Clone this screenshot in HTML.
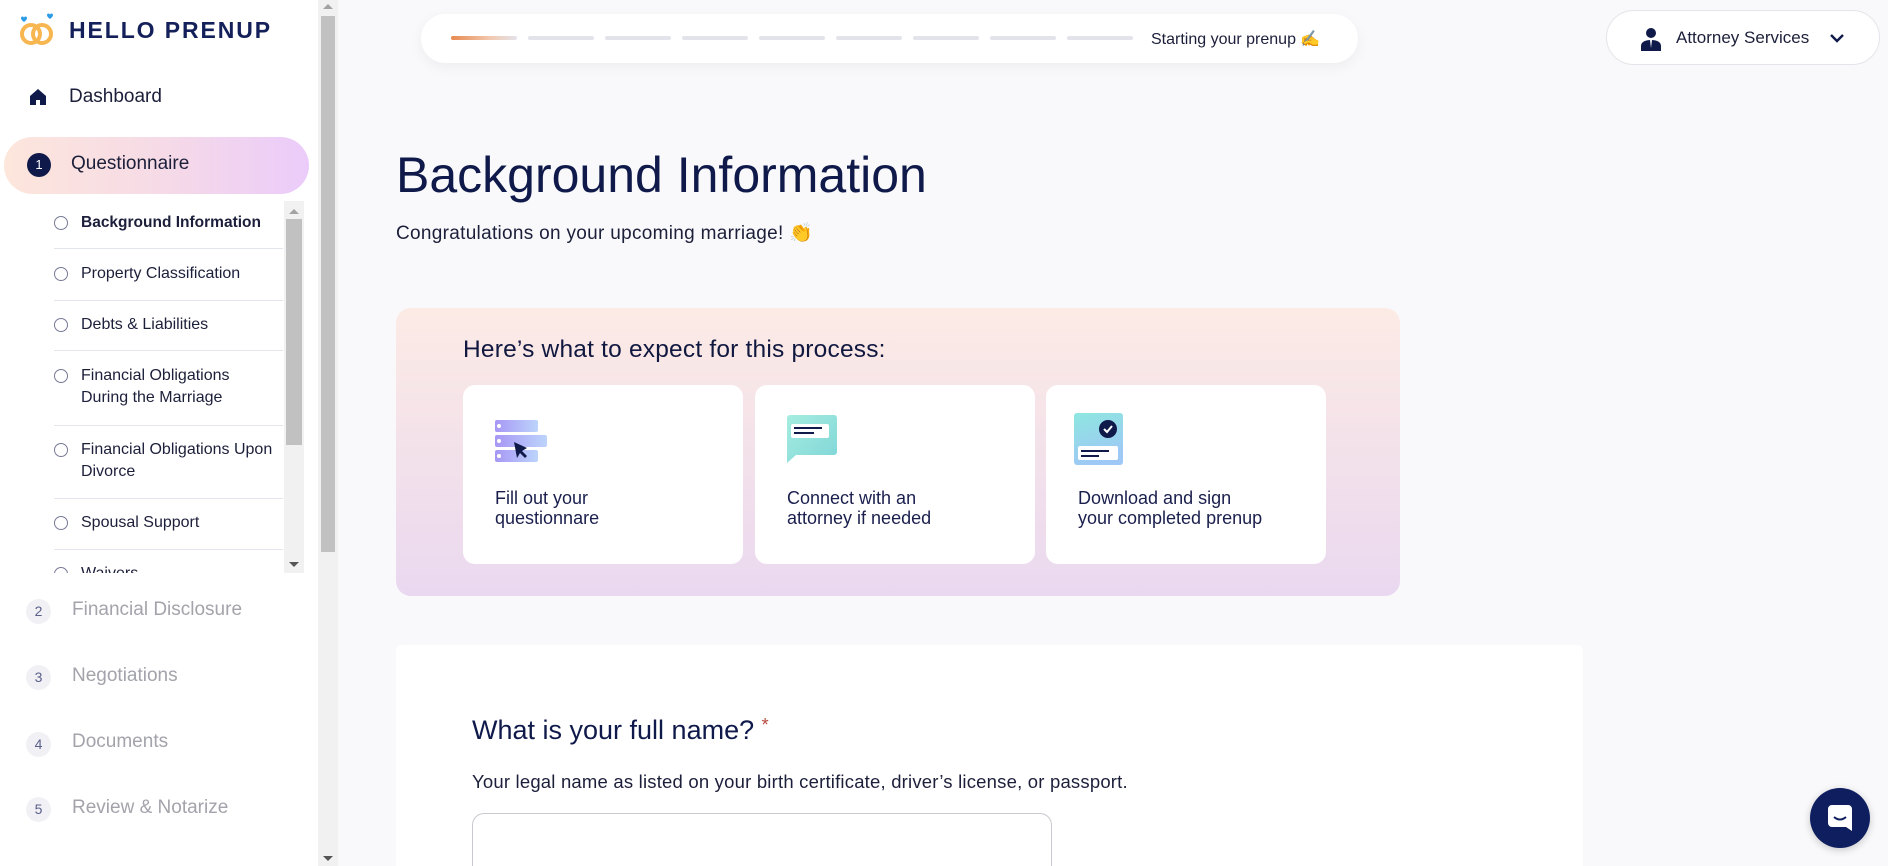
<!DOCTYPE html>
<html style="overflow:hidden;width:1888px;height:866px"><head><meta charset="utf-8"><style>
*{box-sizing:border-box;margin:0;padding:0}
body{width:1888px;height:866px;overflow:hidden;background:#f9f9fb;font-family:"Liberation Sans",sans-serif;color:#0f1a4a;position:relative}
.abs{position:absolute}
#side{left:0;top:0;width:318px;height:866px;background:#fff}
#sbar{left:318px;top:0;width:20px;height:866px;background:#f1f1f1}
.sub{position:absolute;left:81px;font-size:16px;color:#1c1f3a;line-height:22px}
.rad{position:absolute;left:54px;width:14px;height:14px;border:1.8px solid #777a95;border-radius:50%}
.div{position:absolute;left:54px;width:229px;height:1px;background:#e2e5ee}
.step{position:absolute;left:26px;width:25px;height:25px;border-radius:50%;background:#f1f1f5;color:#5a5f8a;font-size:14px;text-align:center;line-height:25px}
.stept{position:absolute;left:72px;font-size:19px;color:#a3a3ab}
.card{position:absolute;top:385px;width:280px;height:179px;background:#fff;border-radius:12px}
.card p{position:absolute;left:32px;top:103px;font-size:18px;line-height:20px;color:#1a1f4d}
.dash{position:absolute;top:22px;width:66px;height:4px;background:#e3e3ec;border-radius:2px}
</style></head><body>
<div id="side" class="abs"></div>
<div id="sbar" class="abs"><div class="abs" style="left:3px;top:16px;width:14px;height:536px;background:#c1c1c1"></div>
<div class="abs" style="left:5px;top:4px;border:5px solid transparent;border-bottom-color:#a3a3a3;border-top:0"></div>
<div class="abs" style="left:5px;top:856px;border:5px solid transparent;border-top-color:#555;border-bottom:0"></div></div>

<svg class="abs" style="left:18px;top:12px" width="40" height="38" viewBox="0 0 40 38">
<circle cx="13" cy="22" r="9" fill="none" stroke="#f8b650" stroke-width="4"/>
<circle cx="24" cy="22" r="9" fill="none" stroke="#f8b650" stroke-width="4"/>
<path d="M3 6c0-2 3-2 3 0c0-2 3-2 3 0c0 2-3 4-3 4s-3-2-3-4z" fill="#2b9be8"/>
<path d="M29 3c0-2 3-2 3 0c0-2 3-2 3 0c0 2-3 4-3 4s-3-2-3-4z" fill="#2b9be8"/></svg>
<div class="abs" style="left:69px;top:17px;font-size:23px;font-weight:bold;letter-spacing:1.9px;color:#14205a">HELLO PRENUP</div>

<svg class="abs" style="left:29px;top:88px" width="18" height="18" viewBox="0 0 18 18"><path d="M9 1L1 8v9h6v-5h4v5h6V8z" fill="#0f1a4a"/></svg>
<div class="abs" style="left:69px;top:86px;font-size:19px;color:#1c1f3a">Dashboard</div>

<div class="abs" style="left:4px;top:137px;width:305px;height:57px;border-radius:29px;background:linear-gradient(90deg,#fde6dc,#f6dbe6 50%,#ebcbfa)"></div>
<div class="abs" style="left:27px;top:153px;width:24px;height:24px;border-radius:50%;background:#0f1a4a;color:#fff;font-size:13px;text-align:center;line-height:24px">1</div>
<div class="abs" style="left:71px;top:153px;font-size:19px;color:#1c1f3a">Questionnaire</div>

<div class="abs" style="left:0;top:201px;width:304px;height:372px;overflow:hidden">
<div class="rad" style="top:15px"></div><div class="sub" style="top:11px;font-weight:bold;font-size:15.5px">Background Information</div>
<div class="div" style="top:47px"></div>
<div class="rad" style="top:66px"></div><div class="sub" style="top:62px">Property Classification</div>
<div class="div" style="top:99px"></div>
<div class="rad" style="top:117px"></div><div class="sub" style="top:113px">Debts &amp; Liabilities</div>
<div class="div" style="top:149px"></div>
<div class="rad" style="top:168px"></div><div class="sub" style="top:164px">Financial Obligations<br>During the Marriage</div>
<div class="div" style="top:224px"></div>
<div class="rad" style="top:242px"></div><div class="sub" style="top:238px">Financial Obligations Upon<br>Divorce</div>
<div class="div" style="top:297px"></div>
<div class="rad" style="top:315px"></div><div class="sub" style="top:311px">Spousal Support</div>
<div class="div" style="top:348px"></div>
<div class="rad" style="top:366px"></div><div class="sub" style="top:362px">Waivers</div>
<div class="abs" style="left:284px;top:0;width:20px;height:372px;background:#f1f1f1"><div class="abs" style="left:2px;top:18px;width:16px;height:226px;background:#c1c1c1"></div>
<div class="abs" style="left:5px;top:8px;border:5px solid transparent;border-bottom-color:#a3a3a3;border-top:0"></div>
<div class="abs" style="left:5px;top:361px;border:5px solid transparent;border-top-color:#555;border-bottom:0"></div></div>
</div>

<div class="step" style="top:599px">2</div><div class="stept" style="top:599px">Financial Disclosure</div>
<div class="step" style="top:665px">3</div><div class="stept" style="top:665px">Negotiations</div>
<div class="step" style="top:732px">4</div><div class="stept" style="top:731px">Documents</div>
<div class="step" style="top:797px">5</div><div class="stept" style="top:797px">Review &amp; Notarize</div>

<div class="abs" style="left:421px;top:14px;width:937px;height:49px;background:#fff;border-radius:25px;box-shadow:0 4px 14px rgba(0,0,0,0.05)">
<div class="dash" style="left:30px;background:linear-gradient(90deg,#e88a50,#f1c9b0 60%,#e3e3ec)"></div>
<div class="dash" style="left:107px"></div><div class="dash" style="left:184px"></div><div class="dash" style="left:261px"></div><div class="dash" style="left:338px"></div><div class="dash" style="left:415px"></div><div class="dash" style="left:492px"></div><div class="dash" style="left:569px"></div><div class="dash" style="left:646px"></div>
<div class="abs" style="left:730px;top:15px;font-size:16px;color:#1c1f3a">Starting your prenup ✍</div></div>

<div class="abs" style="left:1606px;top:10px;width:274px;height:55px;background:#fff;border:1px solid #e4e4ea;border-radius:28px">
<svg class="abs" style="left:32px;top:16px" width="24" height="24" viewBox="0 0 24 24"><circle cx="12" cy="6" r="5" fill="#0f1a4a"/><path d="M2 24v-5c0-4 4-6 10-6s10 2 10 6v5z" fill="#0f1a4a"/><path d="M11 13l1 8 1-8z" fill="#fff"/></svg>
<div class="abs" style="left:69px;top:17px;font-size:17px;color:#1c1f3a">Attorney Services</div>
<svg class="abs" style="left:222px;top:22px" width="16" height="11" viewBox="0 0 16 11"><path d="M2 2l6 6 6-6" fill="none" stroke="#0f1a4a" stroke-width="2.4"/></svg></div>

<div class="abs" style="left:396px;top:146px;font-size:50px;font-weight:300;color:#0f1a4a;letter-spacing:0px">Background Information</div>
<div class="abs" style="left:396px;top:221px;font-size:19px;color:#1c1f3a;letter-spacing:0.3px">Congratulations on your upcoming marriage! 👏</div>

<div class="abs" style="left:396px;top:308px;width:1004px;height:288px;border-radius:15px;background:linear-gradient(180deg,#fcebe5,#f3e1ea 50%,#ead8f0)">
<div class="abs" style="left:67px;top:28px;font-size:24.5px;color:#111840;letter-spacing:0.2px">Here’s what to expect for this process:</div></div>

<div class="card" style="left:463px">
<svg class="abs" style="left:32px;top:35px" width="55" height="45" viewBox="0 0 55 45"><defs><linearGradient id="g1"><stop offset="0" stop-color="#a797f5"/><stop offset="1" stop-color="#bcd4fb"/></linearGradient></defs>
<rect x="0" y="0" width="43" height="12" rx="2" fill="url(#g1)"/><rect x="0" y="15" width="52" height="12" rx="2" fill="url(#g1)"/><rect x="0" y="30" width="43" height="12" rx="2" fill="url(#g1)"/>
<circle cx="4" cy="6" r="2" fill="#fff"/><circle cx="4" cy="21" r="2" fill="#fff"/><circle cx="4" cy="36" r="2" fill="#fff"/>
<path d="M19 22l3 16 3-5 5 5 2-2-5-5 5-3z" fill="#0f1a4a"/></svg>
<p>Fill out your<br>questionnare</p></div>
<div class="card" style="left:755px">
<svg class="abs" style="left:32px;top:30px" width="52" height="48" viewBox="0 0 52 48"><defs><linearGradient id="g2" x1="0" y1="0" x2="1" y2="1"><stop offset="0" stop-color="#a6ede0"/><stop offset="1" stop-color="#7fd6d8"/></linearGradient></defs>
<path d="M0 3a3 3 0 0 1 3-3h44a3 3 0 0 1 3 3v34a3 3 0 0 1-3 3H9l-9 8z" fill="url(#g2)"/><rect x="4" y="9" width="38" height="14" rx="2" fill="#fff"/><rect x="7" y="12" width="28" height="2" fill="#0f1a4a"/><rect x="7" y="17" width="20" height="2" fill="#0f1a4a"/></svg>
<p>Connect with an<br>attorney if needed</p></div>
<div class="card" style="left:1046px">
<svg class="abs" style="left:28px;top:28px" width="52" height="56" viewBox="0 0 52 56"><defs><linearGradient id="g3" x1="0" y1="0" x2="0.3" y2="1"><stop offset="0" stop-color="#8ee7e0"/><stop offset="1" stop-color="#9ec8f5"/></linearGradient></defs>
<rect x="0" y="0" width="49" height="52" rx="3" fill="url(#g3)"/><circle cx="34" cy="16" r="9" fill="#0f1a4a"/><path d="M30 16l3 3 5-6" fill="none" stroke="#fff" stroke-width="2"/><rect x="4" y="33" width="40" height="14" rx="2" fill="#fff"/><rect x="7" y="37" width="28" height="2" fill="#0f1a4a"/><rect x="7" y="42" width="18" height="2" fill="#0f1a4a"/></svg>
<p>Download and sign<br>your completed prenup</p></div>

<div class="abs" style="left:396px;top:645px;width:1187px;height:221px;background:#fff;border-radius:6px 6px 0 0"></div>
<div class="abs" style="left:472px;top:715px;font-size:27px;color:#0f1a4a">What is your full name? <span style="color:#b5483b;font-size:18px;vertical-align:top">*</span></div>
<div class="abs" style="left:472px;top:771px;font-size:18.5px;color:#1c1f3a;letter-spacing:0.2px">Your legal name as listed on your birth certificate, driver’s license, or passport.</div>
<div class="abs" style="left:472px;top:813px;width:580px;height:53px;border:1px solid #c9c9cf;border-bottom:0;border-radius:12px 12px 0 0;background:#fff"></div>

<div class="abs" style="left:1810px;top:788px;width:60px;height:60px;border-radius:50%;background:#0f1e5f;box-shadow:0 2px 8px rgba(0,0,0,0.2)">
<svg class="abs" style="left:18px;top:17px" width="24" height="26" viewBox="0 0 24 26"><path d="M4 0h16a4 4 0 0 1 4 4v22l-6-4H4a4 4 0 0 1-4-4V4a4 4 0 0 1 4-4z" fill="#fff"/><path d="M6 12q6 5 12 0" fill="none" stroke="#0f1e5f" stroke-width="2"/></svg></div>
</body></html>
